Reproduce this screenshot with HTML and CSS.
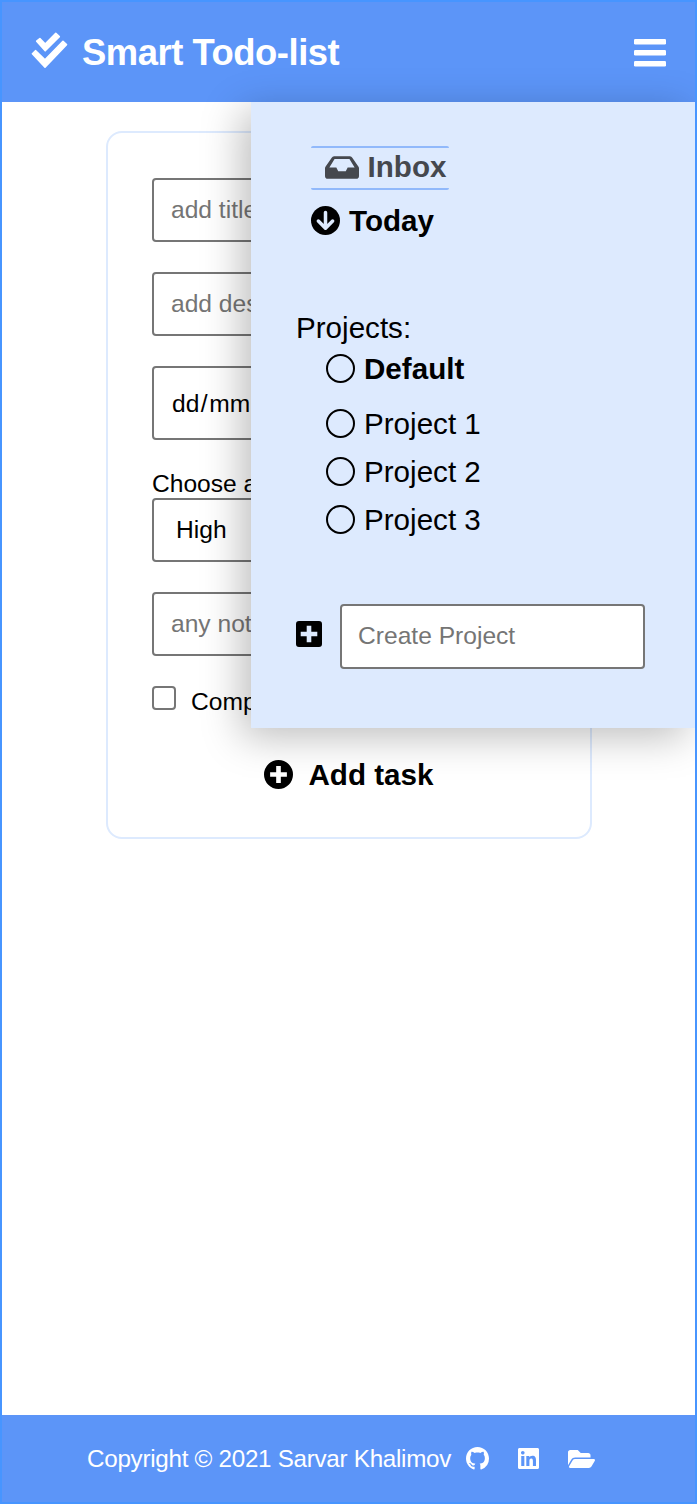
FILE: index.html
```html
<!DOCTYPE html>
<html lang="en">
<head>
<meta charset="utf-8">
<title>Smart Todo-list</title>
<link rel="stylesheet" href="styles.css">
</head>
<body>
<div class="app">
  <header class="header">
    <svg class="logo" viewBox="0 0 36 36"><g fill="#fff" stroke="#fff" stroke-width="1.600" stroke-linejoin="round"><path d="M5.700 9.200 8.900 6.500 14.200 12 24.800 1.400 28.300 4.600 14.200 18.800z"/><path d="M1.400 21.800 4.700 18.700 14 27.800 32 9.300 35.500 12.600 14 35.100z"/></g></svg>
    <h1 class="title">Smart Todo-list</h1>
    <svg class="bars" viewBox="0 0 32 28" fill="#fff"><rect y="0" width="32" height="5.6" rx="1.3"/><rect y="11" width="32" height="5.6" rx="1.3"/><rect y="22" width="32" height="5.6" rx="1.3"/></svg>
  </header>

  <main class="main">
    <form class="card">
      <div class="field muted">add title</div>
      <div class="field muted">add description</div>
      <div class="field date">dd<span class="slash">/</span>mm<span class="slash">/</span>yyyy</div>
      <div class="label">Choose a priority:</div>
      <div class="field select">High</div>
      <div class="field muted">any notes</div>
      <div class="complete"><span class="checkbox"></span><span>Completed</span></div>
      <div class="add">
        <svg class="add-icon" viewBox="0 0 512 512"><path fill-rule="evenodd" d="M256 0a256 256 0 1 0 0 512a256 256 0 1 0 0-512zM215 108h82v107h107v82H297v107h-82V297H108v-82h107z"/></svg>
        <span>Add task</span>
      </div>
    </form>
  </main>

  <nav class="menu">
    <div class="nav-item active">
      <svg class="inbox-icon" viewBox="0 0 576 384" fill="#45484e"><path fill-rule="evenodd" d="M567.900 178 462.250 25.500A48 48 0 0 0 422.300 0H153.700a48 48 0 0 0-40 25.500L8 178a48 48 0 0 0-8 27v131a48 48 0 0 0 48 48h480a48 48 0 0 0 48-48V205a48 48 0 0 0-8-27zM162 46h252l88 144H384l-32 64H224l-32-64H74z"/></svg>
      <span>Inbox</span>
    </div>
    <div class="nav-item today">
      <svg class="circle-icon" viewBox="0 0 512 512"><circle cx="256" cy="256" r="256"/><path fill="none" stroke="#ddeafe" stroke-width="62" stroke-linecap="round" stroke-linejoin="round" d="M256 116v272M130 266l126 126 126-126"/></svg>
      <span>Today</span>
    </div>

    <div class="projects-title">Projects:</div>
    <ul class="projects">
      <li class="project default"><span class="ring"></span>Default</li>
      <li class="project"><span class="ring"></span>Project 1</li>
      <li class="project"><span class="ring"></span>Project 2</li>
      <li class="project"><span class="ring"></span>Project 3</li>
    </ul>

    <div class="create">
      <svg class="square-icon" viewBox="0 0 26 26"><path fill-rule="evenodd" d="M3 0h20a3 3 0 0 1 3 3v20a3 3 0 0 1-3 3H3a3 3 0 0 1-3-3V3a3 3 0 0 1 3-3zM10.700 4.700v6h-6v4.600h6v6h4.600v-6h6v-4.600h-6v-6z"/></svg>
      <div class="field muted create-field">Create Project</div>
    </div>
  </nav>

  <footer class="footer">
    <span class="copy">Copyright © 2021 Sarvar Khalimov</span>
    <svg class="github" viewBox="0 0 16 16" fill="#fff"><path d="M8 0C3.580 0 0 3.580 0 8c0 3.540 2.290 6.530 5.470 7.590.4.070.55-.17.55-.38 0-.19-.01-.82-.01-1.490-2.010.37-2.530-.49-2.690-.94-.09-.23-.48-.94-.82-1.130-.28-.15-.68-.52-.01-.53.63-.01 1.080.58 1.230.82.72 1.210 1.870.87 2.330.66.07-.52.28-.87.51-1.070-1.780-.2-3.640-.89-3.640-3.950 0-.87.31-1.590.82-2.150-.08-.2-.36-1.020.08-2.120 0 0 .67-.21 2.200.82.64-.18 1.320-.27 2-.27s1.360.09 2 .27c1.530-1.040 2.200-.82 2.200-.82.44 1.100.16 1.920.08 2.120.51.56.82 1.270.82 2.150 0 3.070-1.870 3.750-3.650 3.950.29.25.54.73.54 1.480 0 1.070-.01 1.930-.01 2.200 0 .21.15.46.55.38A8.010 8.010 0 0 0 16 8c0-4.420-3.580-8-8-8z"/></svg>
    <svg class="linkedin" viewBox="0 32 448 448" fill="#fff"><path d="M416 32H31.900C14.300 32 0 46.500 0 64.300v383.400C0 465.500 14.300 480 31.900 480H416c17.600 0 32-14.500 32-32.300V64.300c0-17.800-14.400-32.300-32-32.300zM135.400 416H69V202.200h66.500V416zm-33.200-243c-21.300 0-38.500-17.300-38.500-38.500S80.900 96 102.200 96c21.200 0 38.500 17.300 38.500 38.500 0 21.300-17.200 38.500-38.500 38.500zm282.100 243h-66.400V312c0-24.800-.5-56.700-34.500-56.700-34.600 0-39.900 27-39.900 54.900V416h-66.400V202.200h63.700v29.200h.9c8.900-16.800 30.600-34.500 62.900-34.500 67.200 0 79.700 44.300 79.700 101.900V416z"/></svg>
    <svg class="folder" viewBox="0 64 576 384" fill="#fff"><path d="M572.700 292.100 500.300 416.200A64.100 64.100 0 0 1 445 448H45c-18.500 0-30-20.100-20.700-36.100l72.400-124.100A64 64 0 0 1 152 256h400c18.500 0 30 20.100 20.700 36.100zM152 224h328v-48c0-26.500-21.500-48-48-48H272l-64-64H48C21.500 64 0 85.500 0 112v278.050l69.100-118.400C86.200 242.300 118 224 152 224z"/></svg>
  </footer>
</div>
</body>
</html>
```
FILE: styles.css
```css
* { box-sizing: border-box; }
body {
  margin: 0;
  font-family: "Liberation Sans", Arial, sans-serif;
  font-size: 24.6px;
  line-height: 28px;
  color: #000;
}
svg { display: block; flex: none; overflow: visible; }
.app {
  position: relative;
  display: flex;
  flex-direction: column;
  width: 697px;
  height: 1504px;
  border: 2px solid #4795ff;
  background: #fff;
  overflow: hidden;
}
.header {
  display: flex;
  align-items: center;
  height: 99.5px;
  padding: 0 29px;
  background: #5c95f8;
  color: #fff;
}
.logo { width: 36px; height: 36px; margin-top: -4px; }
.title {
  margin: 3px 0 0 15px;
  font-size: 36.4px;
  line-height: 42px;
  letter-spacing: -.46px;
  white-space: nowrap;
}
.bars { width: 32px; height: 28px; margin: 3px 0 0 auto; }
.main { flex: 1; padding: 29.500px 103.500px 0; }
.card {
  height: 707.5px;
  padding: 44.500px;
  border: 2px solid #ddeafe;
  border-radius: 16px;
}
.field {
  display: flex;
  align-items: center;
  height: 64.5px;
  margin-bottom: 29.7px;
  padding: 0 17px;
  border: 2px solid #767676;
  border-radius: 4px;
  background: #fff;
}
.muted { color: #757575; }
.date { height: 74px; padding-left: 18px; padding-top: 2px; }
.slash { margin: 0 1.5px; }
.select { padding-left: 22px; }
.complete { display: flex; gap: 15px; height: 32px; }
.complete span:last-child { padding-top: 2px; }
.checkbox {
  width: 24px;
  height: 24px;
  border: 2px solid #767676;
  border-radius: 4px;
}
.add {
  display: flex;
  align-items: center;
  justify-content: center;
  gap: 16px;
  margin-top: 39px;
  font-size: 29.6px;
  font-weight: bold;
  line-height: 36px;
}
.add-icon, .circle-icon { width: 29px; height: 29px; }
.menu {
  position: absolute;
  top: 99.5px;
  right: 0;
  width: 444px;
  height: 626.5px;
  padding: 44.500px 50px 0 45px;
  background: #ddeafe;
  box-shadow: -9px 9px 38px rgba(0, 0, 0, .26);
  font-size: 29.6px;
  line-height: 34px;
}
.nav-item {
  display: flex;
  align-items: center;
  width: 138px;
  margin-left: 15px;
  gap: 9px;
  font-weight: bold;
}
.active {
  height: 44px;
  padding-left: 14px;
  padding-bottom: 2px;
  border: solid #91b9fb;
  border-width: 2px 0;
  border-radius: 2px;
  color: #45484e;
  gap: 8.5px;
}
.inbox-icon { width: 34px; height: 23px; }
.today { margin-top: 13.500px; }
.projects-title { margin-top: 73px; }
.projects { margin: 0; padding: 0 0 0 29.500px; list-style: none; }
.project {
  display: flex;
  align-items: center;
  gap: 9.500px;
  height: 34px;
  margin-bottom: 14px;
}
.default { margin-top: 7px; margin-bottom: 21px; font-weight: bold; }
.ring { width: 29px; height: 29px; border: 2.500px solid #000; border-radius: 50%; }
.create { display: flex; align-items: center; gap: 18px; margin-top: 67.500px; }
.square-icon { width: 26px; height: 26px; margin-top: -5px; }
.create-field { flex: none; width: 305px; margin: 0; padding-left: 16px; font-size: 24.6px; }
.footer {
  display: flex;
  align-items: center;
  height: 87px;
  padding-left: 85px;
  background: #5c95f8;
  color: #fff;
}
.copy { font-size: 24.2px; letter-spacing: -.27px; white-space: nowrap; }
.github { width: 23px; height: 23px; margin-left: 15px; }
.linkedin { width: 21px; height: 21px; margin-left: 29px; }
.folder { width: 27px; height: 18px; margin-left: 29px; }
```
